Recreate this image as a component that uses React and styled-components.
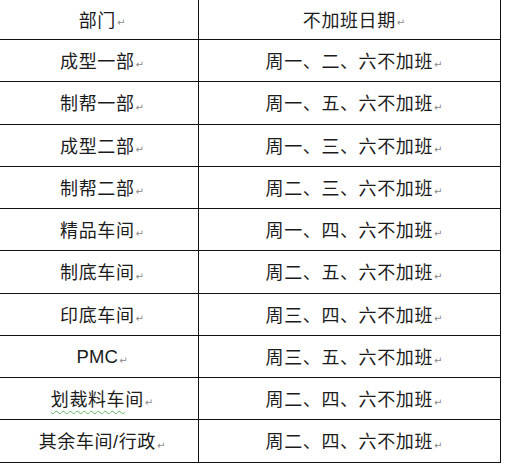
import React from 'react'
import styled, { createGlobalStyle } from 'styled-components'

const Global = createGlobalStyle`
html, body {
  margin: 0;
  padding: 0;
  background: #ffffff;
}
body {
  font-family: "Liberation Sans", "Noto Sans CJK SC", sans-serif;
  color: #1b1b1b;
}
`

const Page = styled.div`
width: 506px;
height: 469px;
overflow: hidden;
background: #fff;
`

const Table = styled.div`
display: grid;
width: 501px;
grid-template-columns: 199px 302px;
grid-template-rows: 40px 42px 43px 42px 42px 42px 43px 42px 42px 42px 43px;
`

const Cell = styled.div`
box-sizing: border-box;
display: flex;
align-items: center;
justify-content: center;
padding-left: ${p => (p.$wide ? 9 : 6)}px;
padding-top: 2px;
border-bottom: 1px solid #111;
border-right: 1px solid #111;
font-size: 18px;
letter-spacing: 0.6px;
line-height: 1;
white-space: nowrap;
`

const Latin = styled.span`
font-family: "Liberation Sans", Arial, sans-serif;
font-size: 18.5px;
letter-spacing: 0.2px;
`

const Squiggle = styled.span`
text-decoration: underline wavy #62b562;
text-decoration-thickness: 1px;
text-underline-offset: 4px;
`

const Mark = styled.span`
font-family: "DejaVu Sans", sans-serif;
font-size: 10px;
color: #8a8a8a;
letter-spacing: 0;
margin-left: 1px;
align-self: flex-end;
margin-bottom: 11px;
`

const rows = [
  ['成型一部', '周一、二、六不加班'],
  ['制帮一部', '周一、五、六不加班'],
  ['成型二部', '周一、三、六不加班'],
  ['制帮二部', '周二、三、六不加班'],
  ['精品车间', '周一、四、六不加班'],
  ['制底车间', '周二、五、六不加班'],
  ['印底车间', '周三、四、六不加班'],
  ['PMC', '周三、五、六不加班'],
  ['划裁料车间', '周二、四、六不加班'],
  ['其余车间/行政', '周二、四、六不加班'],
]

const Dept = ({ name }) => {
  if (name === 'PMC') return <Latin>PMC</Latin>
  if (name === '划裁料车间')
    return (
      <span>
        <Squiggle>划裁料车</Squiggle>间
      </span>
    )
  return <span>{name}</span>
}

const App = () => {
  return (
    <Page>
      <Global />
      <Table>
        <Cell><span>部门</span><Mark>↵</Mark></Cell>
        <Cell $wide><span>不加班日期</span><Mark>↵</Mark></Cell>
        {rows.map(([d, t]) => (
          <React.Fragment key={d}>
            <Cell>
              <Dept name={d} />
              <Mark>↵</Mark>
            </Cell>
            <Cell $wide>
              <span>{t}</span>
              <Mark>↵</Mark>
            </Cell>
          </React.Fragment>
        ))}
      </Table>
    </Page>
  )
}

export default App
